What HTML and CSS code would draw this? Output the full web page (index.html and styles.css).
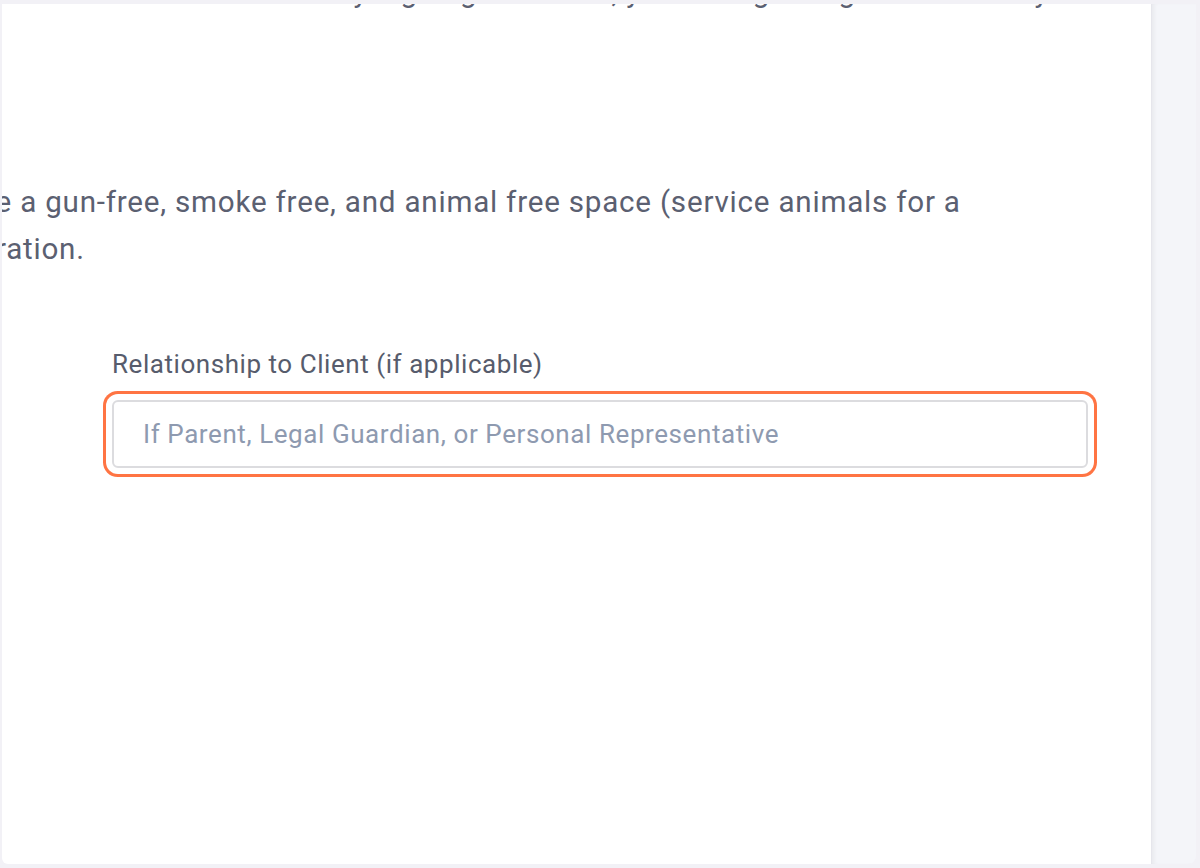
FILE: index.html
```html
<!DOCTYPE html>
<html lang="en">
<head>
<meta charset="UTF-8"/>
<meta name="viewport" content="width=device-width,initial-scale=1.0"/>
<title>Client Intake | Consent</title>
<link rel="stylesheet" href="styles.css">
</head>

<body>
<!-- ─── FRAME ─────────────────────────────────────────────────────────── -->
<div class="frame">
  <main class="sheet">
    <p class="copy lead">data collection. By signing this form, you are agreeing with this fully</p>

    <p class="copy body">We are a gun-free, smoke free, and animal free space (service animals for a<br>registration.</p>

    <!-- ─── RELATIONSHIP FIELD ──────────────────────────────────────────── -->
    <div class="field">
      <label for="relation">Relationship to Client (if applicable)</label>
      <input id="relation" type="text" placeholder="If Parent, Legal Guardian, or Personal Representative">
    </div>
  </main>
  <aside class="rail"></aside>
</div>
</body>
</html>
```

FILE: styles.css
```css
:root{
  --frame:#f2f1f6;--rail:#f4f5f9;--text:#5b6071;--label:#575c6c;
  --hint:#8e9ab0;--line:#dcdcdf;--focus:#ff7443;
}
*,*::before,*::after{box-sizing:border-box;margin:0;padding:0}
body{background:var(--frame);font-family:Roboto,"Noto Sans",sans-serif;color:var(--text);overflow:hidden}

/* ─── FRAME ─────────────────────────────────────────────────────────── */
.frame{display:flex;height:868px;padding:4px 4px 4px 2px}
.sheet{flex:1;background:#fff;overflow:hidden;border-bottom-left-radius:6px}
.rail{width:45px;background:var(--rail);border-left:1px solid #e6e6ec;box-shadow:inset 4px 0 4px -2px rgba(0,0,0,.05);border-bottom-right-radius:8px}

/* ─── COPY ──────────────────────────────────────────────────────────── */
.copy{font-size:29.6px;letter-spacing:.78px;line-height:47px;white-space:nowrap}
.lead{margin-top:-35px;margin-bottom:163px;margin-left:110px}
.body{margin-left:-85px}

/* ─── FIELD ─────────────────────────────────────────────────────────── */
.field{margin:75px 63px 0 110px}
.field label{display:block;font-size:26px;letter-spacing:.55px;line-height:32px;color:var(--label);margin-bottom:20px}
.field input{display:block;width:100%;height:68px;padding:0 29px;border:2px solid var(--line);border-radius:6px;
  font:26px Roboto,"Noto Sans",sans-serif;letter-spacing:.58px;color:var(--text);background:#fff;outline:none;
  box-shadow:0 0 0 6px #fff,0 0 0 9px var(--focus)}
.field input::placeholder{color:var(--hint)}
```
